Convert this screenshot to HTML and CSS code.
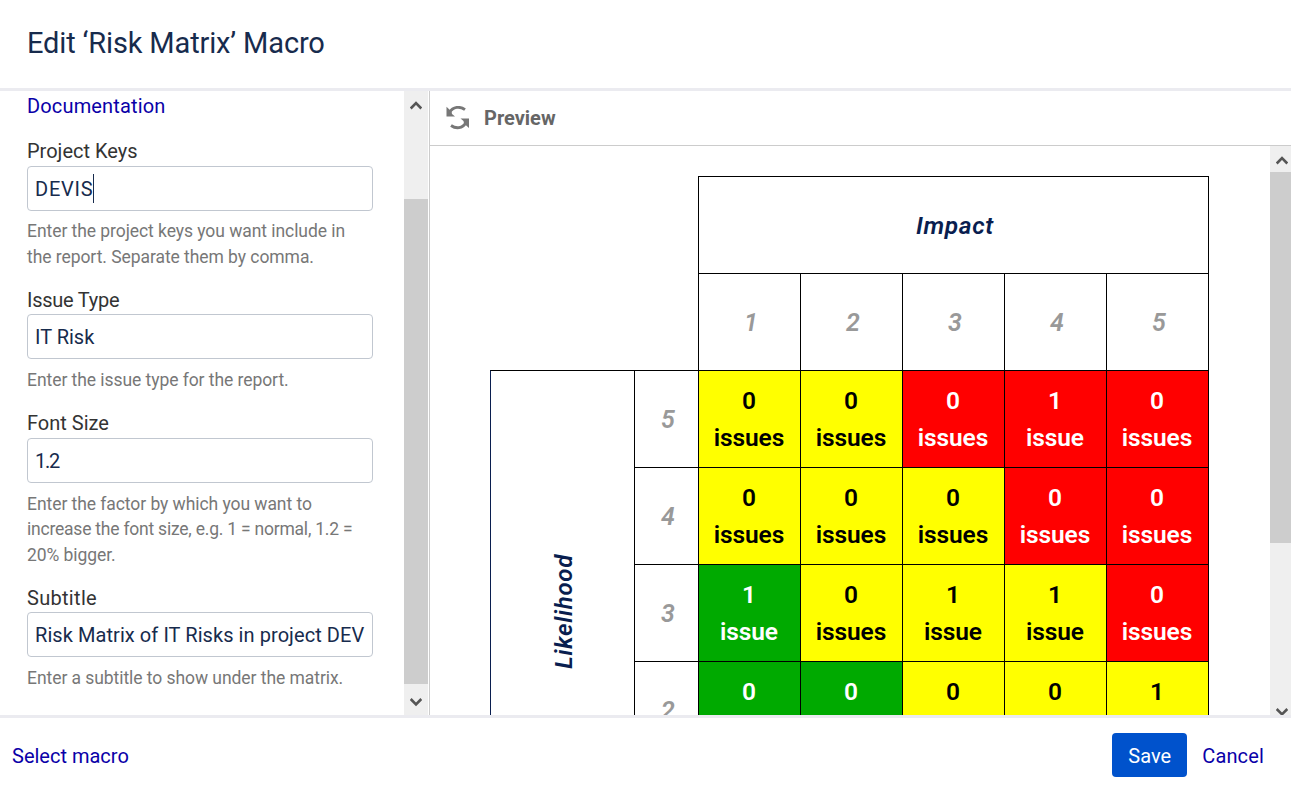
FILE: index.html
```html
<!DOCTYPE html>
<html lang="en">
<head>
<meta charset="utf-8">
<title>Edit Macro</title>
<link rel="stylesheet" href="styles.css">
</head>
<body>
<div class="dialog">
  <header class="dialog-header"><h1 class="title">Edit ‘Risk Matrix’ Macro</h1></header>
  <main class="dialog-body">
    <section class="params">
      <form class="form">
        <a class="link doc-link">Documentation</a>
        <div class="field keys">
          <label class="label">Project Keys</label>
          <div class="input"><span class="value">DEVIS</span><i class="caret"></i></div>
          <p class="hint">Enter the project keys you want include in<br>the report. Separate them by comma.</p>
        </div>
        <div class="field type">
          <label class="label">Issue Type</label>
          <div class="input"><span class="value">IT Risk</span></div>
          <p class="hint">Enter the issue type for the report.</p>
        </div>
        <div class="field size">
          <label class="label">Font Size</label>
          <div class="input"><span class="value">1.2</span></div>
          <p class="hint">Enter the factor by which you want to<br><span class="tight">increase the font size, e.g. 1 = normal, 1.2 =</span><br>20% bigger.</p>
        </div>
        <div class="field sub">
          <label class="label">Subtitle</label>
          <div class="input"><span class="value">Risk Matrix of IT Risks in project DEV</span></div>
          <p class="hint">Enter a subtitle to show under the matrix.</p>
        </div>
      </form>
      <div class="scrollbar left-bar">
        <svg class="arrow" width="12" height="10" viewBox="0 0 12 10"><path d="M.7 8.500 6 3.200l5.300 5.300" fill="none" stroke="#555" stroke-width="2.600"/></svg>
        <div class="thumb"></div>
        <svg class="arrow" width="12" height="10" viewBox="0 0 12 10"><path d="M.7 2 6 7.300 11.300 2" fill="none" stroke="#555" stroke-width="2.600"/></svg>
      </div>
    </section>
    <section class="preview">
      <div class="preview-head">
        <svg class="refresh" width="24" height="24" viewBox="0 0 24 24"><g fill="none" stroke="#777" stroke-width="2.800"><path d="M3.500 6.500C7 .3 14 0 19 3.700"/><path d="M20 16.500C16.500 22.700 10 23 5 19.500"/></g><path d="M.5.800v9.700H9L6 8 5.500 5.500z" fill="#777"/><path d="M23 22v-9.500h-8.500l3 2.500.5 2.500z" fill="#777"/></svg>
        <h2 class="preview-title">Preview</h2>
      </div>
      <div class="preview-body">
        <div class="canvas">
          <div class="matrix">
            <div class="blank"></div><div class="cell impact">Impact</div>
            <div class="cell num">1</div><div class="cell num">2</div><div class="cell num">3</div><div class="cell num">4</div><div class="cell num">5</div>
            <div class="cell likelihood"><span class="vertical">Likelihood</span></div>
            <div class="cell num">5</div>
            <div class="cell yellow">0<br>issues</div><div class="cell yellow">0<br>issues</div><div class="cell red">0<br>issues</div><div class="cell red">1<br>issue</div><div class="cell red">0<br>issues</div>
            <div class="cell num">4</div>
            <div class="cell yellow">0<br>issues</div><div class="cell yellow">0<br>issues</div><div class="cell yellow">0<br>issues</div><div class="cell red">0<br>issues</div><div class="cell red">0<br>issues</div>
            <div class="cell num">3</div>
            <div class="cell green">1<br>issue</div><div class="cell yellow">0<br>issues</div><div class="cell yellow">1<br>issue</div><div class="cell yellow">1<br>issue</div><div class="cell red">0<br>issues</div>
            <div class="cell num">2</div>
            <div class="cell green">0</div><div class="cell green">0</div><div class="cell yellow">0</div><div class="cell yellow">0</div><div class="cell yellow">1</div>
          </div>
        </div>
        <div class="scrollbar right-bar">
          <svg class="arrow" width="12" height="10" viewBox="0 0 12 10"><path d="M.7 8.500 6 3.200l5.300 5.300" fill="none" stroke="#555" stroke-width="2.600"/></svg>
          <div class="thumb"></div>
          <svg class="arrow" width="12" height="10" viewBox="0 0 12 10"><path d="M.7 2 6 7.300 11.300 2" fill="none" stroke="#555" stroke-width="2.600"/></svg>
        </div>
      </div>
    </section>
  </main>
  <footer class="dialog-footer">
    <a class="link">Select macro</a>
    <div class="actions"><button class="save">Save</button><a class="link">Cancel</a></div>
  </footer>
</div>
</body>
</html>
```
FILE: styles.css
```css
* { box-sizing: border-box; }
body { margin: 0; font-family: Roboto, "Liberation Sans", sans-serif; background: #fff; color: #333; overflow: hidden; }
h1, h2, p { margin: 0; font-weight: 400; }
.dialog { display: flex; flex-direction: column; width: 1291px; height: 791px; }
.dialog-header { height: 91px; flex: none; padding: 24px 27px; border-bottom: 3px solid #ebebf0; }
.title { font-size: 29px; line-height: 38px; letter-spacing: -.14px; color: #172b4d; white-space: nowrap; }
.dialog-body { display: flex; height: 624px; flex: none; }
.params { display: flex; width: 430px; flex: none; border-right: 1px solid #ccc; }
.form { width: 404px; padding: 2px 31px 0 27px; font-size: 20px; }
.link { color: #0a00a8; }
.doc-link { display: block; line-height: 26px; letter-spacing: .15px; }
.field { display: flex; flex-direction: column; }
.keys { margin-top: 19px; }
.type { margin-top: 17px; }
.size { margin-top: 16px; }
.sub { margin-top: 17px; }
.label { display: block; height: 28px; line-height: 27px; }
.type .label { height: 27px; letter-spacing: -.25px; }
.sub .label { height: 27px; letter-spacing: .3px; }
.input { display: flex; align-items: center; height: 45px; padding: 0 0 0 7px; border: 1px solid #c1c7d0; border-radius: 4px; color: #172b4d; }
.value { white-space: nowrap; line-height: 28px; }
.keys .value { letter-spacing: .75px; }
.size .value { padding-top: 1px; letter-spacing: -1.2px; }
.sub .value { letter-spacing: .07px; }
.caret { width: 1px; height: 29px; background: #172b4d; }
.hint { margin-top: 9px; font-size: 17.500px; line-height: 25.500px; letter-spacing: -.06px; color: #777; white-space: nowrap; }
.keys .hint { margin-top: 8px; }
.tight { letter-spacing: -.22px; }
.scrollbar { display: flex; flex-direction: column; align-items: center; background: #efefef; flex: none; }
.left-bar { width: 24px; padding: 9px 0 8px; }
.left-bar .thumb { margin-top: 89px; margin-bottom: 13px; height: 485px; }
.thumb { width: 100%; background: #cdcdcd; flex: none; }
.arrow { flex: none; }
.preview { flex: 1; min-width: 0; }
.preview-head { display: flex; align-items: center; height: 55px; padding-left: 16px; gap: 14px; border-bottom: 1px solid #ccc; }
.preview-title { font-size: 20px; font-weight: 700; color: #666; }
.preview-body { display: flex; height: 569px; overflow: hidden; }
.canvas { width: 840px; flex: none; padding: 30px 0 0 60px; }
.matrix { display: grid; grid-template-columns: 144px 64px repeat(5, 102px); grid-auto-rows: 97px; font-size: 25px; font-weight: 600; line-height: 37px; }
.cell { display: flex; align-items: center; justify-content: center; text-align: center; margin: 0 -1px -1px 0; border: 1px solid #000; }
.blank { grid-column: 1 / 3; grid-row: 1 / 3; }
.impact { grid-column: 3 / 8; padding: 1px 0 0 3px; font-size: 24.500px; font-style: italic; letter-spacing: .65px; color: #091e4f; }
.num { font-style: italic; color: #999; padding: 1px 0 0 3px; }
.likelihood { grid-column: 1; grid-row: 3 / 8; padding: 0 0 3px 3px; border-left-color: #091e4f; font-style: italic; font-size: 24px; letter-spacing: .7px; color: #091e4f; }
.vertical { writing-mode: vertical-rl; transform: rotate(180deg); }
.yellow, .red, .green { display: block; padding: 11px 1px 0 0; font-size: 24.500px; letter-spacing: -.1px; }
.yellow { background: #ff0; color: #000; }
.red { background: #f00; color: #fff; }
.green { background: #0a0; color: #fff; }
.right-bar { width: 24px; padding: 9px 0 0; }
.right-bar .thumb { margin: 7px 0 164px; height: 371px; }
.dialog-footer { display: flex; align-items: flex-start; justify-content: space-between; height: 76px; padding: 15px 27px 0 12px; border-top: 3px solid #ebebf0; font-size: 20px; line-height: 46px; }
.actions { display: flex; gap: 15px; letter-spacing: .15px; }
.save { width: 75px; height: 44px; padding: 1px 0 0; border: 0; border-radius: 4px; background: #0052cc; color: #fff; font: 20px Roboto, sans-serif; }
```
